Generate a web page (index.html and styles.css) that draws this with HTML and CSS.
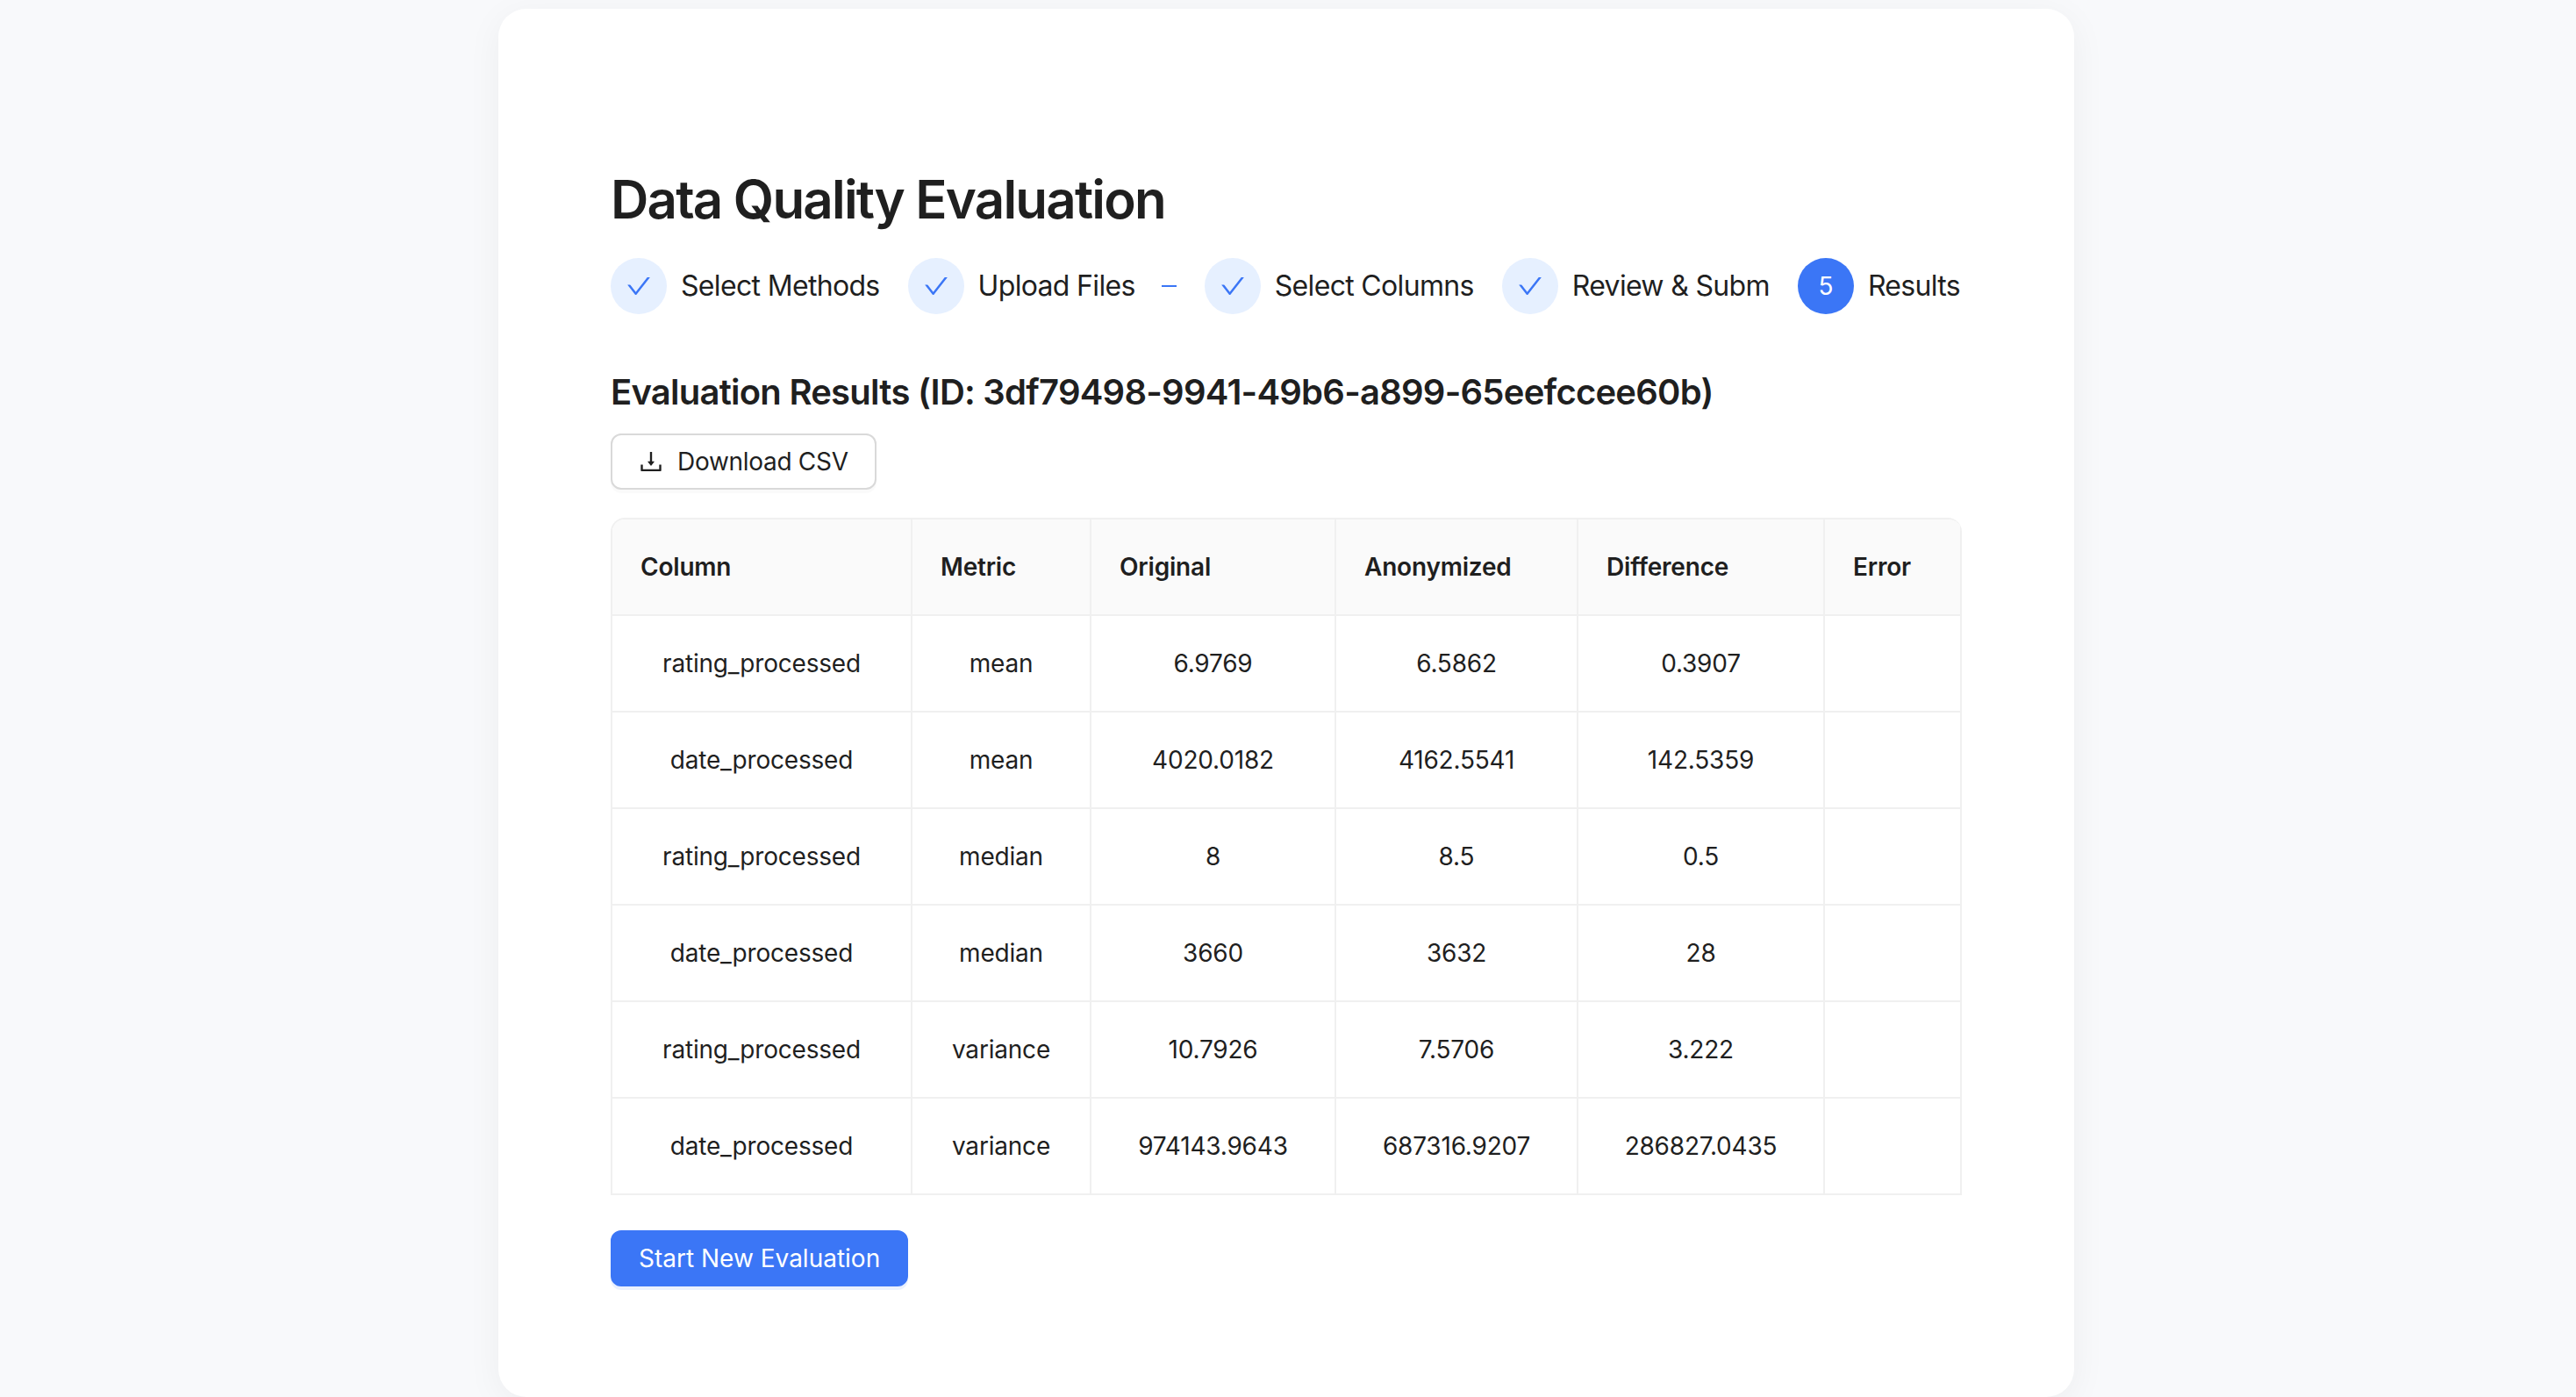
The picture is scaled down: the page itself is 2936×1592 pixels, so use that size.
FILE: index.html
```html
<!DOCTYPE html>
<html lang="en">
<head>
<meta charset="UTF-8" />
<meta name="viewport" content="width=device-width, initial-scale=1" />
<title>Data Quality Evaluation</title>
<link rel="stylesheet" href="styles.css">
</head>
<body>
  <main class="card">
    <h1 class="page-title">Data Quality Evaluation</h1>

    <div class="steps">
      <div class="step">
        <span class="step-icon"><svg class="check" viewBox="64 64 896 896"><path d="M912 190h-69.9c-9.8 0-19.1 4.5-25.1 12.2L404.7 724.5 207 474a32 32 0 0 0-25.1-12.2H112c-6.7 0-10.4 7.7-6.3 12.9l273.9 347c12.8 16.2 37.4 16.2 50.3 0l488.4-618.9c4.1-5.1.4-12.8-6.3-12.8z"/></svg></span>
        <span class="step-label">Select Methods</span>
      </div>
      <div class="step">
        <span class="step-icon"><svg class="check" viewBox="64 64 896 896"><path d="M912 190h-69.9c-9.8 0-19.1 4.5-25.1 12.2L404.7 724.5 207 474a32 32 0 0 0-25.1-12.2H112c-6.7 0-10.4 7.7-6.3 12.9l273.9 347c12.8 16.2 37.4 16.2 50.3 0l488.4-618.9c4.1-5.1.4-12.8-6.3-12.8z"/></svg></span>
        <span class="step-label">Upload Files</span>
        <span class="step-tail"></span>
      </div>
      <div class="step">
        <span class="step-icon"><svg class="check" viewBox="64 64 896 896"><path d="M912 190h-69.9c-9.8 0-19.1 4.5-25.1 12.2L404.7 724.5 207 474a32 32 0 0 0-25.1-12.2H112c-6.7 0-10.4 7.7-6.3 12.9l273.9 347c12.8 16.2 37.4 16.2 50.3 0l488.4-618.9c4.1-5.1.4-12.8-6.3-12.8z"/></svg></span>
        <span class="step-label">Select Columns</span>
      </div>
      <div class="step">
        <span class="step-icon"><svg class="check" viewBox="64 64 896 896"><path d="M912 190h-69.9c-9.8 0-19.1 4.5-25.1 12.2L404.7 724.5 207 474a32 32 0 0 0-25.1-12.2H112c-6.7 0-10.4 7.7-6.3 12.9l273.9 347c12.8 16.2 37.4 16.2 50.3 0l488.4-618.9c4.1-5.1.4-12.8-6.3-12.8z"/></svg></span>
        <span class="step-label">Review &amp; Subm</span>
      </div>
      <div class="step">
        <span class="step-icon step-icon-active">5</span>
        <span class="step-label">Results</span>
      </div>
    </div>

    <h3 class="results-title">Evaluation Results (ID: 3df79498-9941-49b6-a899-65eefccee60b)</h3>

    <button class="btn">
      <svg class="download" viewBox="64 64 896 896"><path d="M505.7 661a8 8 0 0 0 12.6 0l112-141.7c4.1-5.2.4-12.9-6.3-12.9h-74.1V168c0-4.4-3.6-8-8-8h-60c-4.4 0-8 3.6-8 8v338.3H400c-6.7 0-10.4 7.7-6.3 12.9l112 141.8zM878 626h-60c-4.4 0-8 3.6-8 8v154H214V634c0-4.4-3.6-8-8-8h-60c-4.4 0-8 3.6-8 8v198c0 17.7 14.3 32 32 32h684c17.7 0 32-14.3 32-32V634c0-4.4-3.6-8-8-8z"/></svg>
      Download CSV
    </button>

    <div class="table-wrap">
      <table class="results">
        <colgroup>
          <col class="col-column">
          <col class="col-metric">
          <col class="col-original">
          <col class="col-anon">
          <col class="col-diff">
          <col class="col-error">
        </colgroup>
        <thead>
          <tr><th>Column</th><th>Metric</th><th>Original</th><th>Anonymized</th><th>Difference</th><th>Error</th></tr>
        </thead>
        <tbody>
          <tr><td>rating_processed</td><td>mean</td><td>6.9769</td><td>6.5862</td><td>0.3907</td><td></td></tr>
          <tr><td>date_processed</td><td>mean</td><td>4020.0182</td><td>4162.5541</td><td>142.5359</td><td></td></tr>
          <tr><td>rating_processed</td><td>median</td><td>8</td><td>8.5</td><td>0.5</td><td></td></tr>
          <tr><td>date_processed</td><td>median</td><td>3660</td><td>3632</td><td>28</td><td></td></tr>
          <tr><td>rating_processed</td><td>variance</td><td>10.7926</td><td>7.5706</td><td>3.222</td><td></td></tr>
          <tr><td>date_processed</td><td>variance</td><td>974143.9643</td><td>687316.9207</td><td>286827.0435</td><td></td></tr>
        </tbody>
      </table>
    </div>

    <button class="btn btn-primary">Start New Evaluation</button>
  </main>
</body>
</html>
```

FILE: styles.css
```css
* {
  box-sizing: border-box;
}
html, body {
  height: 100%;
}
body {
  margin: 0;
  padding: 10px 4px 0 0;
  background: #f8f9fb;
  color: #1f1f1f;
  font-family: Inter, "Liberation Sans", sans-serif;
  overflow: hidden;
}

.card {
  width: 1796px;
  height: 1582px;
  margin: 0 auto;
  padding: 179px 128px 0;
  background: #fff;
  border-radius: 32px;
  box-shadow: 0 8px 40px rgba(0, 0, 0, 0.05);
}

.page-title {
  margin: 0 0 29px;
  font-size: 60px;
  line-height: 76px;
  font-weight: 600;
  letter-spacing: -1.8px;
}

/* steps */
.steps {
  display: flex;
  align-items: center;
  gap: 32px;
  height: 64px;
  margin-bottom: 57px;
}
.step {
  display: flex;
  align-items: center;
  gap: 16px;
}
.step-icon {
  display: flex;
  align-items: center;
  justify-content: center;
  width: 64px;
  height: 64px;
  border-radius: 50%;
  background: #e6f0ff;
  font-size: 28px;
}
.step-icon-active {
  background: #3b76f6;
  color: #fff;
}
.check {
  width: 28px;
  height: 28px;
  fill: #3b76f6;
}
.step-label {
  font-size: 32px;
  line-height: 64px;
  letter-spacing: -0.67px;
  white-space: nowrap;
}
.step-tail {
  width: 17px;
  height: 2px;
  margin-left: 14px;
  background: #3b76f6;
}

.results-title {
  margin: 0 0 15px;
  font-size: 40px;
  line-height: 64px;
  font-weight: 600;
  letter-spacing: -0.76px;
}

/* buttons */
.btn {
  display: flex;
  align-items: center;
  justify-content: center;
  gap: 16px;
  width: fit-content;
  height: 64px;
  padding: 0 30px;
  background: #fff;
  border: 2px solid #d9d9d9;
  border-radius: 12px;
  box-shadow: 0 4px 0 rgba(0, 0, 0, 0.02);
  color: #1f1f1f;
  font-family: inherit;
  font-size: 28px;
  letter-spacing: -0.3px;
  cursor: pointer;
}
.btn-primary {
  background: #3b76f6;
  border-color: #3b76f6;
  box-shadow: 0 4px 0 rgba(59, 118, 246, 0.1);
  color: #fff;
  letter-spacing: 0;
}
.download {
  width: 28px;
  height: 28px;
  fill: #1f1f1f;
}

/* table */
.table-wrap {
  width: 1540px;
  margin: 32px 0 40px;
  border-top: 2px solid #f0f0f0;
  border-left: 2px solid #f0f0f0;
  border-radius: 16px 16px 0 0;
  overflow: hidden;
}
.results {
  width: 100%;
  table-layout: fixed;
  border-collapse: separate;
  border-spacing: 0;
  font-size: 28px;
  letter-spacing: -0.2px;
}
.col-column { width: 342px; }
.col-metric { width: 204px; }
.col-original { width: 279px; }
.col-anon { width: 276px; }
.col-diff { width: 281px; }
.results th, .results td {
  height: 110px;
  padding: 0 32px;
  border-right: 2px solid #f0f0f0;
  border-bottom: 2px solid #f0f0f0;
}
.results th {
  background: #fafafa;
  text-align: left;
  font-weight: 600;
}
.results td {
  text-align: center;
}
```
